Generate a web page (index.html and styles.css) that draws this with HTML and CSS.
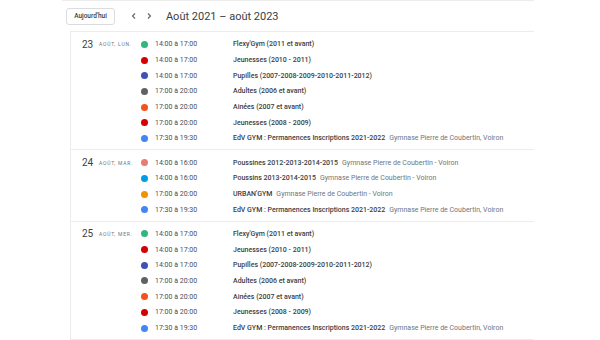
FILE: index.html
```html
<!DOCTYPE html>
<html lang="fr">
<head>
  <meta charset="UTF-8" />
  <title>Agenda</title>
  <link rel="stylesheet" href="styles.css">
</head>
<body>

  <div class="agenda">

    <div class="toolbar">
      <button class="today">Aujourd'hui</button>
      <div class="nav">
        <svg width="8" height="8" viewBox="0 0 8 8"><path d="M5 1.5 L2.5 4 L5 6.5" fill="none" stroke="#5f6368" stroke-width="1.1"/></svg>
        <svg width="8" height="8" viewBox="0 0 8 8"><path d="M3 1.5 L5.5 4 L3 6.5" fill="none" stroke="#5f6368" stroke-width="1.1"/></svg>
      </div>
      <div class="range">Août 2021 – août 2023</div>
    </div>

    <div class="days">

      <div class="day">
        <div class="date"><span class="num">23</span><span class="label">août, lun.</span></div>
        <div class="events">
          <div class="event"><span class="dot" style="background:#33b679"></span><span class="time">14:00 à 17:00</span><span class="title">Flexy'Gym (2011 et avant)</span></div>
          <div class="event"><span class="dot" style="background:#d50000"></span><span class="time">14:00 à 17:00</span><span class="title">Jeunesses (2010 - 2011)</span></div>
          <div class="event"><span class="dot" style="background:#3f51b5"></span><span class="time">14:00 à 17:00</span><span class="title">Pupilles (2007-2008-2009-2010-2011-2012)</span></div>
          <div class="event"><span class="dot" style="background:#616161"></span><span class="time">17:00 à 20:00</span><span class="title">Adultes (2006 et avant)</span></div>
          <div class="event"><span class="dot" style="background:#f4511e"></span><span class="time">17:00 à 20:00</span><span class="title">Ainées (2007 et avant)</span></div>
          <div class="event"><span class="dot" style="background:#d50000"></span><span class="time">17:00 à 20:00</span><span class="title">Jeunesses (2008 - 2009)</span></div>
          <div class="event"><span class="dot" style="background:#4285f4"></span><span class="time">17:30 à 19:30</span><span class="title">EdV GYM : Permanences Inscriptions 2021-2022</span><span class="place">Gymnase Pierre de Coubertin, Voiron</span></div>
        </div>
      </div>

      <div class="day">
        <div class="date"><span class="num">24</span><span class="label">août, mar.</span></div>
        <div class="events">
          <div class="event"><span class="dot" style="background:#e67c73"></span><span class="time">14:00 à 16:00</span><span class="title">Poussines 2012-2013-2014-2015</span><span class="place">Gymnase Pierre de Coubertin - Voiron</span></div>
          <div class="event"><span class="dot" style="background:#039be5"></span><span class="time">14:00 à 16:00</span><span class="title">Poussins 2013-2014-2015</span><span class="place">Gymnase Pierre de Coubertin - Voiron</span></div>
          <div class="event"><span class="dot" style="background:#f09300"></span><span class="time">17:00 à 20:00</span><span class="title">URBAN'GYM</span><span class="place">Gymnase Pierre de Coubertin - Voiron</span></div>
          <div class="event"><span class="dot" style="background:#4285f4"></span><span class="time">17:30 à 19:30</span><span class="title">EdV GYM : Permanences Inscriptions 2021-2022</span><span class="place">Gymnase Pierre de Coubertin, Voiron</span></div>
        </div>
      </div>

      <div class="day">
        <div class="date"><span class="num">25</span><span class="label">août, mer.</span></div>
        <div class="events">
          <div class="event"><span class="dot" style="background:#33b679"></span><span class="time">14:00 à 17:00</span><span class="title">Flexy'Gym (2011 et avant)</span></div>
          <div class="event"><span class="dot" style="background:#d50000"></span><span class="time">14:00 à 17:00</span><span class="title">Jeunesses (2010 - 2011)</span></div>
          <div class="event"><span class="dot" style="background:#3f51b5"></span><span class="time">14:00 à 17:00</span><span class="title">Pupilles (2007-2008-2009-2010-2011-2012)</span></div>
          <div class="event"><span class="dot" style="background:#616161"></span><span class="time">17:00 à 20:00</span><span class="title">Adultes (2006 et avant)</span></div>
          <div class="event"><span class="dot" style="background:#f4511e"></span><span class="time">17:00 à 20:00</span><span class="title">Ainées (2007 et avant)</span></div>
          <div class="event"><span class="dot" style="background:#d50000"></span><span class="time">17:00 à 20:00</span><span class="title">Jeunesses (2008 - 2009)</span></div>
          <div class="event"><span class="dot" style="background:#4285f4"></span><span class="time">17:30 à 19:30</span><span class="title">EdV GYM : Permanences Inscriptions 2021-2022</span><span class="place">Gymnase Pierre de Coubertin, Voiron</span></div>
        </div>
      </div>

    </div>
  </div>

</body>
</html>
```

FILE: styles.css
```css
* {
  box-sizing: border-box;
}

body {
  margin: 0;
  background: #fff;
  font-family: Roboto, "Liberation Sans", sans-serif;
  color: #3c4043;
}

.agenda {
  width: 472px;
  margin-left: 62px;
  border-top: 1px solid #ececec;
}

.toolbar {
  display: flex;
  align-items: center;
  height: 30px;
  padding-left: 4px;
}

.today {
  height: 17px;
  width: 49px;
  padding: 0;
  border: 1px solid #dadce0;
  border-radius: 3px;
  background: #fff;
  font-family: inherit;
  font-size: 6.5px;
  font-weight: 500;
  color: #3c4043;
}

.nav {
  display: flex;
  gap: 7px;
  margin-left: 15px;
}

.range {
  margin-left: 13px;
  font-size: 11px;
  color: #3c4043;
}

.days {
  margin-left: 8px;
  border-left: 1px solid #ececec;
  border-top: 1px solid #ececec;
  border-bottom: 1px solid #ececec;
}

.day {
  display: flex;
  padding: 4.5px 0 3px;
  border-bottom: 1px solid #ececec;
}

.day:last-child {
  border-bottom: none;
}

.date {
  width: 70px;
  height: 15.7px;
  display: flex;
  align-items: center;
  padding-left: 11px;
}

.num {
  font-size: 10px;
  width: 17px;
}

.label {
  font-size: 5px;
  text-transform: uppercase;
  letter-spacing: 0.75px;
  color: #70757a;
}

.event {
  display: flex;
  align-items: center;
  height: 15.7px;
  font-size: 7px;
}

.dot {
  width: 7px;
  height: 7px;
  border-radius: 50%;
  margin-right: 7px;
}

.time {
  width: 78px;
  color: #4a4e52;
}

.title {
  font-weight: 500;
}

.place {
  margin-left: 4px;
  color: #70757a;
}
```
